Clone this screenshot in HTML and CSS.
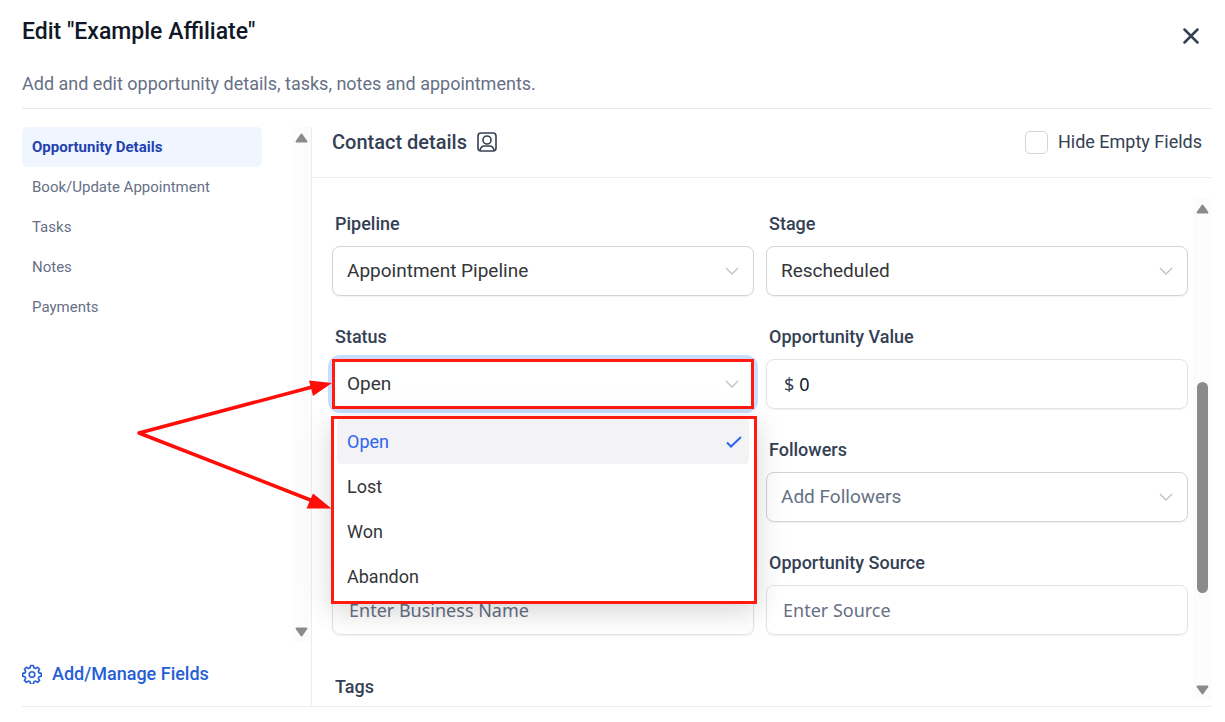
FILE: index.html
```html
<!doctype html>
<html lang="en">
<head>
    <meta charset="UTF-8">
    <meta name="viewport" content="width=device-width, initial-scale=1.0">
    <title>Edit opportunity</title>

    <link rel="stylesheet" href="styles.css">
</head>
<body>

<div class="dialog">
    <header class="dialog-header">
        <div class="dialog-top">
            <h1>Edit "Example Affiliate"</h1>
            <button class="close" type="button" aria-label="Close">
                <svg width="16" height="16" viewBox="0 0 16 16"><path d="M1.500 1.500l13 13M14.500 1.500l-13 13"/></svg>
            </button>
        </div>
        <p>Add and edit opportunity details, tasks, notes and appointments.</p>
    </header>

    <div class="dialog-body">
        <aside class="sidebar">
            <div class="sidebar-scroll">
                <nav class="tabs">
                    <a class="tab active" href="#details">Opportunity Details</a>
                    <a class="tab" href="#appointment">Book/Update Appointment</a>
                    <a class="tab" href="#tasks">Tasks</a>
                    <a class="tab" href="#notes">Notes</a>
                    <a class="tab" href="#payments">Payments</a>
                </nav>
                <div class="scrollbar">
                    <svg width="13" height="10" viewBox="0 0 13 10"><path d="M6.500 1.500L11.500 8.500H1.500z"/></svg>
                    <svg width="13" height="10" viewBox="0 0 13 10"><path d="M6.500 8.500L11.500 1.500H1.500z"/></svg>
                </div>
            </div>
            <button class="manage" type="button">
                <svg width="20" height="20" viewBox="0 0 20 20">
                    <path d="M8.600 1.500h2.800l.5 2.300 1.700.7 2-1.300 2 2-1.300 2 .7 1.700 2.300.5v2.800l-2.300.5-.7 1.700 1.300 2-2 2-2-1.300-1.700.7-.5 2.300H8.600l-.5-2.300-1.700-.7-2 1.300-2-2 1.300-2-.7-1.700-2.300-.5V9.400l2.300-.5.7-1.700-1.300-2 2-2 2 1.300 1.700-.7z"/>
                    <circle cx="10" cy="10.500" r="2.800"/>
                </svg>
                Add/Manage Fields
            </button>
        </aside>

        <main class="content">
            <div class="content-header">
                <h2>Contact details</h2>
                <svg class="contact-icon" width="20" height="20" viewBox="0 0 20 20">
                    <rect x="1" y="1" width="18" height="18" rx="3"/>
                    <circle cx="10" cy="8" r="4"/>
                    <path d="M3 18.500c.5-3.300 2.200-4.500 4.500-4.500h5c2.300 0 4 1.200 4.500 4.500"/>
                </svg>
                <label class="hide-empty"><input type="checkbox"> Hide Empty Fields</label>
            </div>

            <div class="content-scroll">
                <form class="fields">
                    <div class="field">
                        <label for="pipeline">Pipeline</label>
                        <div class="control">
                            <select id="pipeline"><option>Appointment Pipeline</option></select>
                            <svg class="chevron" width="14" height="8" viewBox="0 0 14 8"><path d="M1 1l6 6 6-6"/></svg>
                        </div>
                    </div>
                    <div class="field">
                        <label for="stage">Stage</label>
                        <div class="control">
                            <select id="stage"><option>Rescheduled</option></select>
                            <svg class="chevron" width="14" height="8" viewBox="0 0 14 8"><path d="M1 1l6 6 6-6"/></svg>
                        </div>
                    </div>

                    <div class="field">
                        <label for="status">Status</label>
                        <div class="control open">
                            <select id="status"><option>Open</option></select>
                            <svg class="chevron" width="14" height="8" viewBox="0 0 14 8"><path d="M1 1l6 6 6-6"/></svg>
                            <div class="menu" role="listbox" aria-label="Status">
                                <button class="option selected" type="button" role="option" aria-selected="true">
                                    Open
                                    <svg width="16" height="12" viewBox="0 0 16 12"><path d="M1 6.500l4 4L15 1"/></svg>
                                </button>
                                <button class="option" type="button" role="option">Lost</button>
                                <button class="option" type="button" role="option">Won</button>
                                <button class="option" type="button" role="option">Abandon</button>
                            </div>
                            <svg class="arrows" width="205" height="150" viewBox="0 0 205 150">
                                <path class="line" d="M182 14.500L7 61l174 68"/>
                                <path d="M177 8.500l23 2.500-19 13zM181 121.500l18.500 15H174.500z"/>
                            </svg>
                        </div>
                    </div>
                    <div class="field">
                        <label for="value">Opportunity Value</label>
                        <div class="control money">
                            <span>$</span>
                            <input id="value" type="text" value="0">
                        </div>
                    </div>

                    <div class="field followers">
                        <label for="followers">Followers</label>
                        <div class="control">
                            <select id="followers" class="empty"><option>Add Followers</option></select>
                            <svg class="chevron" width="14" height="8" viewBox="0 0 14 8"><path d="M1 1l6 6 6-6"/></svg>
                        </div>
                    </div>

                    <div class="field">
                        <div class="control">
                            <input type="text" placeholder="Enter Business Name" aria-label="Business Name">
                        </div>
                    </div>
                    <div class="field">
                        <label for="source">Opportunity Source</label>
                        <div class="control">
                            <input id="source" type="text" placeholder="Enter Source">
                        </div>
                    </div>

                    <div class="tags">Tags</div>
                </form>
                <div class="scrollbar">
                    <svg width="13" height="10" viewBox="0 0 13 10"><path d="M6.500 1.500L11.500 8.500H1.500z"/></svg>
                    <div class="track"><div class="thumb"></div></div>
                    <svg width="13" height="10" viewBox="0 0 13 10"><path d="M6.500 8.500L11.500 1.500H1.500z"/></svg>
                </div>
            </div>
        </main>
    </div>
</div>

</body>
</html>
```

FILE: styles.css
```css
* {
    box-sizing: border-box;
}

body {
    margin: 0;
    background: #fff;
    color: #344054;
    font: 18px/20px Roboto, sans-serif;
}

h1, h2, p {
    margin: 0;
    font-weight: 500;
}

button, input, select {
    font: inherit;
    color: inherit;
}

button {
    border: 0;
    padding: 0;
    background: none;
    cursor: pointer;
}

svg {
    flex: none;
    fill: none;
}

.dialog {
    display: flex;
    flex-direction: column;
    min-height: 100vh;
    padding: 0 13px 15px 22px;
}

/* header */
.dialog-header {
    padding: 17px 0 14px;
    border-bottom: 1px solid #e4e7ec;
}

.dialog-top {
    display: flex;
    justify-content: space-between;
    align-items: flex-start;
    margin-bottom: 27px;
}

.dialog-top h1 {
    font-size: 23px;
    line-height: 30px;
    color: #101828;
}

.dialog-header p {
    font-weight: 400;
    color: #667085;
}

.close {
    display: flex;
    margin-top: 11px;
    margin-right: 13px;
    stroke: #344054;
    stroke-width: 2.5;
    stroke-linecap: round;
}

/* left column */
.dialog-body {
    display: flex;
    flex: 1;
    padding-top: 18px;
    border-bottom: 1px solid #eaecf0;
}

.sidebar {
    display: flex;
    flex-direction: column;
    flex: none;
    width: 289px;
}

.sidebar-scroll {
    display: flex;
    flex: 1;
    justify-content: space-between;
}

.tabs {
    width: 240px;
}

.tab {
    display: block;
    padding: 0 10px;
    border-radius: 5px;
    font-size: 15px;
    line-height: 40px;
    color: #667085;
    text-decoration: none;
}

.tab.active {
    background: #eff6ff;
    color: #2342b0;
    font-weight: 700;
}

.scrollbar {
    display: flex;
    flex-direction: column;
    align-items: center;
    justify-content: space-between;
    flex: none;
    width: 19px;
    padding: 6px 1px 5px 0;
    background: #fcfcfc;
}

.scrollbar svg {
    fill: #8b8b8b;
    stroke: #8b8b8b;
    stroke-width: 2;
    stroke-linejoin: round;
}

.manage {
    display: flex;
    align-items: center;
    gap: 10px;
    margin: 22px 0;
    font-weight: 500;
    color: #255ed6;
}

.manage svg {
    stroke: #255ed6;
    stroke-width: 1.6;
    stroke-linejoin: round;
}

/* right column */
.content {
    display: flex;
    flex-direction: column;
    flex: 1;
    min-width: 0;
    border-left: 1px solid #eaecf0;
}

.content-header {
    display: flex;
    align-items: center;
    height: 51px;
    padding: 0 10px 20px 20px;
    border-bottom: 1px solid #eaecf0;
}

.content-header h2 {
    font-size: 20px;
}

.contact-icon {
    margin-left: 10px;
    stroke: #344054;
    stroke-width: 1.6;
}

.hide-empty {
    display: flex;
    align-items: center;
    gap: 10px;
    margin-left: auto;
}

.hide-empty input {
    appearance: none;
    width: 23px;
    height: 23px;
    margin: 0;
    border: 1px solid #d0d5dd;
    border-radius: 5px;
}

.content-scroll {
    display: flex;
    flex: 1;
    padding: 20px 0 6px;
}

.fields {
    display: grid;
    grid-template-columns: 1fr 1fr;
    gap: 31px 12px;
    align-content: start;
    flex: 1;
    padding: 16px 5px 0 20px;
}

.field {
    display: flex;
    flex-direction: column;
    justify-content: flex-end;
}

.field label, .tags {
    padding-left: 3px;
    font-weight: 500;
}

.field label {
    margin-bottom: 12px;
}

.tags {
    margin-top: 11px;
}

.followers {
    grid-column: 2;
}

.control {
    position: relative;
    display: flex;
    height: 50px;
    border-radius: 8px;
    box-shadow: 0 1px 2px rgba(16, 24, 40, .06);
}

.control select, .control input {
    appearance: none;
    flex: 1;
    min-width: 0;
    padding: 0 16px;
    border: 1px solid #d0d5dd;
    border-radius: 8px;
    background: #fff;
}

.control select {
    padding: 0 14px;
    font-size: 19px;
    color: #333639;
}

.control select.empty {
    color: #667085;
}

.control input {
    border-color: #e0e3e9;
    font-family: "Noto Sans", sans-serif;
    color: #101828;
}

.control input::placeholder {
    color: #667085;
    opacity: 1;
}

.chevron {
    position: absolute;
    right: 15px;
    top: 21px;
    stroke: #c2c2c2;
    stroke-width: 1.4;
    pointer-events: none;
}

.money {
    align-items: center;
    padding-left: 17px;
    border: 1px solid #e0e3e9;
    font-family: "Noto Sans", sans-serif;
}

.money input {
    border: 0;
    padding: 0 5px;
}

/* opened status list */
.open {
    box-shadow: 0 0 0 4px #c9deff;
}

.open select {
    border: 3px solid #ff1a12;
    border-radius: 0;
    padding: 0 12px;
}

.menu {
    position: absolute;
    z-index: 1;
    top: 57px;
    left: -1px;
    right: -3px;
    padding: 0 5px 2px 3px;
    border: 3px solid #ff1a12;
    background: #fff;
    box-shadow: 0 8px 24px rgba(0, 0, 0, .12), 0 4px 40px rgba(0, 0, 0, .05);
}

.option {
    display: flex;
    align-items: center;
    justify-content: space-between;
    width: 100%;
    height: 45px;
    padding: 0 7px 0 10px;
    border-radius: 4px;
    color: #333639;
}

.option.selected {
    background: #f3f3f5;
    color: #2f63f0;
}

.option svg {
    stroke: #2f63f0;
    stroke-width: 2;
}

.arrows {
    position: absolute;
    z-index: 2;
    left: -200px;
    top: 13px;
    fill: #ff0d08;
    pointer-events: none;
}

.arrows .line {
    fill: none;
    stroke: #ff0d08;
    stroke-width: 3.5;
    stroke-linejoin: round;
}

/* thumb of the right scrollbar */
.track {
    display: flex;
    flex-direction: column;
    flex: 1;
}

.track::before {
    content: "";
    flex: 168;
}

.track::after {
    content: "";
    flex: 92;
}

.thumb {
    flex: 210;
    width: 11px;
    border-radius: 6px;
    background: #8b8b8b;
}
```
